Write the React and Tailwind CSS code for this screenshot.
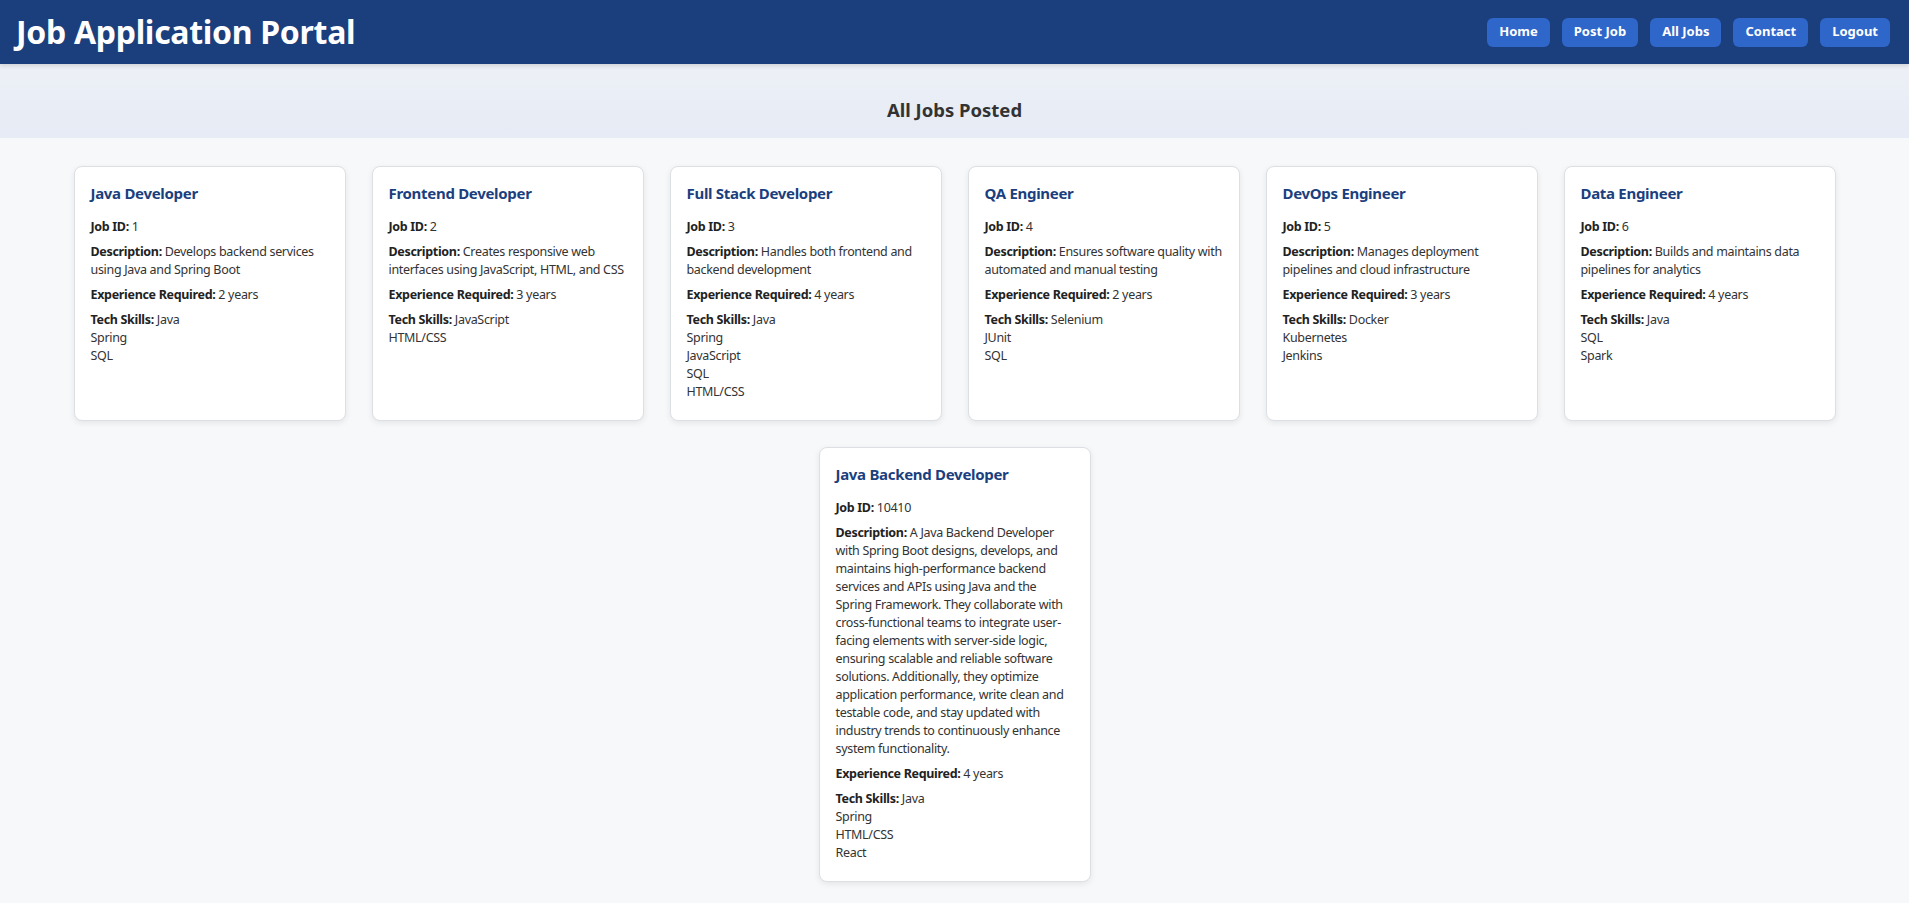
import React from "react";

const jobs = [
  { id: 1, title: "Java Developer", desc: "Develops backend services using Java and Spring Boot", exp: 2, skills: ["Java", "Spring", "SQL"] },
  { id: 2, title: "Frontend Developer", desc: "Creates responsive web interfaces using JavaScript, HTML, and CSS", exp: 3, skills: ["JavaScript", "HTML/CSS"] },
  { id: 3, title: "Full Stack Developer", desc: "Handles both frontend and backend development", exp: 4, skills: ["Java", "Spring", "JavaScript", "SQL", "HTML/CSS"] },
  { id: 4, title: "QA Engineer", desc: "Ensures software quality with automated and manual testing", exp: 2, skills: ["Selenium", "JUnit", "SQL"] },
  { id: 5, title: "DevOps Engineer", desc: "Manages deployment pipelines and cloud infrastructure", exp: 3, skills: ["Docker", "Kubernetes", "Jenkins"] },
  { id: 6, title: "Data Engineer", desc: "Builds and maintains data pipelines for analytics", exp: 4, skills: ["Java", "SQL", "Spark"] },
  {
    id: 10410,
    title: "Java Backend Developer",
    desc: "A Java Backend Developer with Spring Boot designs, develops, and maintains high-performance backend services and APIs using Java and the Spring Framework. They collaborate with cross-functional teams to integrate user-facing elements with server-side logic, ensuring scalable and reliable software solutions. Additionally, they optimize application performance, write clean and testable code, and stay updated with industry trends to continuously enhance system functionality.",
    exp: 4,
    skills: ["Java", "Spring", "HTML/CSS", "React"],
  },
];

const links = ["Home", "Post Job", "All Jobs", "Contact", "Logout"];

function JobCard({ job }) {
  return (
    <div className="w-[272px] rounded-lg border border-[#dcdfe4] bg-white px-4 pt-4 pb-[19px] shadow-[0_2px_6px_rgba(0,0,0,0.08)]">
      <h3 className="mb-[14px] text-[15px] leading-[21px] font-bold tracking-[-0.3px] text-[#1b3f7e]">{job.title}</h3>
      <div className="text-[12.5px] leading-[18px] tracking-[-0.32px] text-[#333]">
        <p className="mb-[7px]">
          <strong className="text-[#222]">Job ID:</strong> {job.id}
        </p>
        <p className="mb-[7px]">
          <strong className="text-[#222]">Description:</strong> {job.desc}
        </p>
        <p className="mb-[7px]">
          <strong className="text-[#222]">Experience Required:</strong> {job.exp} years
        </p>
        <p>
          <strong className="text-[#222]">Tech Skills:</strong>{" "}
          {job.skills.map((s, i) => (
            <React.Fragment key={s}>
              {i > 0 && <br />}
              {s}
            </React.Fragment>
          ))}
        </p>
      </div>
    </div>
  );
}

export default function App() {
  return (
    <div className="min-h-[903px] bg-[#f7f8fa] font-['Noto_Sans',sans-serif]">
      <header className="relative z-10 flex h-16 items-center justify-between bg-[#1b3e7d] pl-[16px] pr-[19px] shadow-[0_2px_4px_rgba(0,0,0,0.12)]">
        <h1 className="text-[32px] font-bold tracking-[-0.3px] text-white">Job Application Portal</h1>
        <nav className="flex gap-3">
          {links.map((l) => (
            <button
              key={l}
              type="button"
              className="h-[29px] rounded-md bg-[#2f66c9] px-3 text-[13px] font-bold text-white"
            >
              {l}
            </button>
          ))}
        </nav>
      </header>

      <div className="flex h-[74px] items-center justify-center bg-gradient-to-b from-[#edf0f6] to-[#e6ebf5]">
        <h2 className="pt-[17px] text-[18.5px] font-bold text-[#333]">All Jobs Posted</h2>
      </div>

      <div className="flex flex-wrap justify-center gap-[26px] pt-[28px] pb-6">
        {jobs.map((job) => (
          <JobCard key={job.id} job={job} />
        ))}
      </div>
    </div>
  );
}
